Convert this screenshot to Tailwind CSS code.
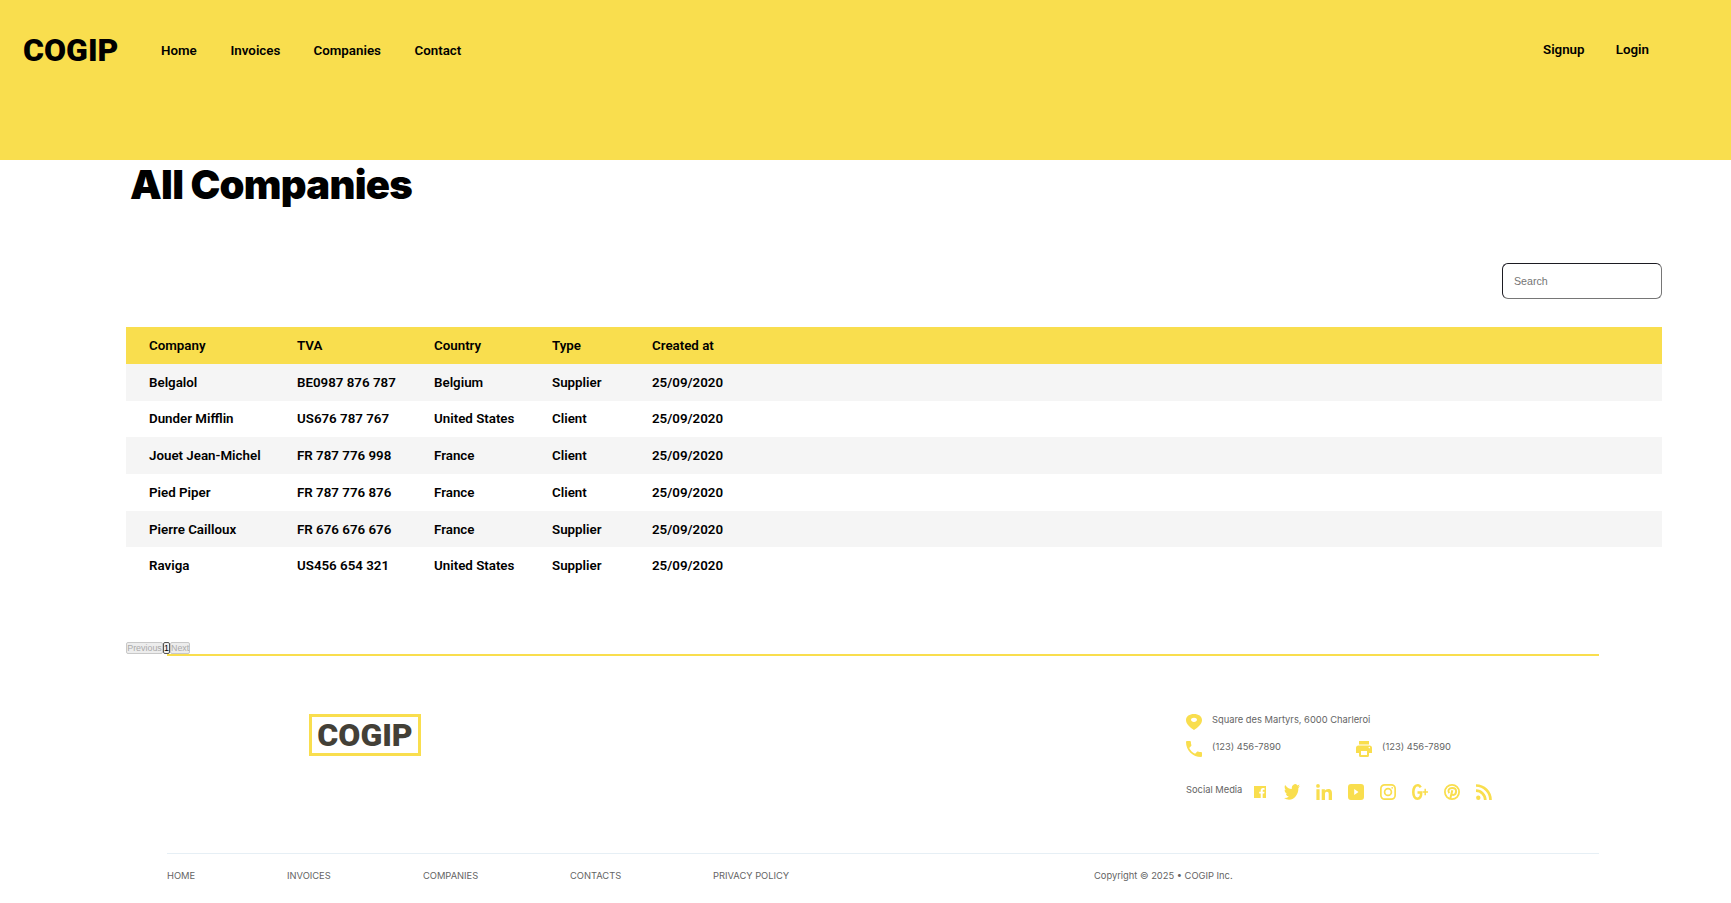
<!DOCTYPE html>
<html lang="en">
<head>
<meta charset="utf-8">
<title>COGIP - All Companies</title>
<script src="https://cdn.jsdelivr.net/npm/@tailwindcss/browser@4"></script>
</head>
<body class="h-[903px] overflow-hidden bg-white font-['Inter',sans-serif] text-black">
<header class="flex h-40 items-start bg-[#f9de4e] font-['Roboto',sans-serif]">
  <div class="ml-[23px] mt-8 w-[138px] text-[32px] leading-9 font-black">COGIP</div>
  <nav class="mt-[41px] flex text-[13.333px] leading-5 font-semibold">
    <a class="w-[69.500px]">Home</a><a class="w-[83px]">Invoices</a><a class="w-[101px]">Companies</a><a>Contact</a>
  </nav>
  <div class="mt-10 ml-auto mr-[82px] flex w-[106px] justify-between text-[13.333px] leading-5 font-semibold"><a>Signup</a><a>Login</a></div>
</header>
<main class="ml-[126px] w-[1536px]">
  <h1 class="h-[103px] pl-1 text-[40px] leading-[50px] font-black tracking-[-0.75px]">All Companies</h1>
  <div class="flex justify-end">
    <input placeholder="Search" class="h-9 w-40 rounded-md border border-t-[#1c1b22] border-l-[#1c1b22] border-r-[#767676] border-b-[#767676] px-[11px] font-['Liberation_Sans',sans-serif] text-[10.667px] placeholder:text-[#757575]">
  </div>
  <table class="mt-7 w-full table-fixed border-collapse text-left font-['Roboto',sans-serif] text-[13.333px] leading-[18px] font-semibold">
    <colgroup><col class="w-[171px]"><col class="w-[137px]"><col class="w-[118px]"><col class="w-[100px]"><col></colgroup>
    <thead><tr class="h-[37px] bg-[#f9de4e]"><th class="pl-[23px] font-semibold">Company</th><th class="font-semibold">TVA</th><th class="font-semibold">Country</th><th class="font-semibold">Type</th><th class="font-semibold">Created at</th></tr></thead>
    <tbody>
      <tr class="h-[37px] bg-[#f5f5f5]"><td class="pl-[23px]">Belgalol</td><td>BE0987 876 787</td><td>Belgium</td><td>Supplier</td><td>25/09/2020</td></tr>
      <tr class="h-9"><td class="pl-[23px]">Dunder Mifflin</td><td>US676 787 767</td><td>United States</td><td>Client</td><td>25/09/2020</td></tr>
      <tr class="h-[37px] bg-[#f5f5f5]"><td class="pl-[23px]">Jouet Jean-Michel</td><td>FR 787 776 998</td><td>France</td><td>Client</td><td>25/09/2020</td></tr>
      <tr class="h-[37px]"><td class="pl-[23px]">Pied Piper</td><td>FR 787 776 876</td><td>France</td><td>Client</td><td>25/09/2020</td></tr>
      <tr class="h-9 bg-[#f5f5f5]"><td class="pt-0.5 pl-[23px]">Pierre Cailloux</td><td class="pt-0.5">FR 676 676 676</td><td class="pt-0.5">France</td><td class="pt-0.5">Supplier</td><td class="pt-0.5">25/09/2020</td></tr>
      <tr class="h-[37px]"><td class="pl-[23px]">Raviga</td><td>US456 654 321</td><td>United States</td><td>Supplier</td><td>25/09/2020</td></tr>
    </tbody>
  </table>
  <div class="mt-[58px] flex h-3 font-['Liberation_Sans',sans-serif] text-[8.9px] leading-[10px]">
    <button disabled class="w-[37px] rounded-[2px] border border-[#c8c8c8] bg-[#ededed] text-[#aaa]">Previous</button>
    <button class="flex w-[7px] justify-center rounded-[2px] border border-[#555] bg-[#efefef]">1</button>
    <button disabled class="w-5 rounded-[2px] border border-[#c8c8c8] bg-[#ededed] text-[#aaa]">Next</button>
  </div>
</main>
<footer class="ml-[167px] w-[1432px] border-t-2 border-[#f9de4e] text-[9.333px] leading-[11px] text-[#646464]">
  <div class="flex h-[197px] justify-between">
    <div class="mt-[58px] ml-[142px] h-[42px] w-28 border-3 border-[#f9de4e] text-center font-['Roboto',sans-serif] text-[32px] leading-9 font-black text-[#434037]">COGIP</div>
    <div class="mt-[58px] w-[413px]">
      <div class="flex h-[27px] gap-2.5">
        <svg class="size-4 fill-[#f9de4e]" viewBox="0 0 16 16"><path fill-rule="evenodd" d="M8 0C3.5 0 0 2.3 0 6c0 4 4 7.500 8 10 4-2.500 8-6 8-10 0-3.700-3.500-6-8-6Zm0 3.700c1.700 0 3 .9 3 2.100S9.700 8 8 8 5 7 5 5.800s1.300-2.100 3-2.100Z"/></svg>
        <span>Square des Martyrs, 6000 Charleroi</span>
      </div>
      <div class="flex h-[43px]">
        <div class="flex w-[170px] gap-2.5">
          <svg class="size-4 fill-[#f9de4e]" viewBox="3 3 18 18"><path d="M6.620 10.790c1.440 2.830 3.760 5.140 6.590 6.590l2.200-2.200c.27-.27.67-.36 1.020-.24 1.120.37 2.330.57 3.570.57.55 0 1 .45 1 1V20c0 .55-.45 1-1 1-9.390 0-17-7.610-17-17 0-.55.45-1 1-1h3.500c.55 0 1 .45 1 1 0 1.250.2 2.450.57 3.570.11.35.03.74-.25 1.020l-2.200 2.200Z"/></svg>
          <span>(123) 456-7890</span>
        </div>
        <div class="flex gap-2.5">
          <svg class="size-4 fill-[#f9de4e]" viewBox="0 0 16 16"><path fill-rule="evenodd" d="M3 0h10v3.500H3ZM2.500 4.500h11A2.500 2.500 0 0 1 16 7v5h-3V9H3v3H0V7a2.500 2.500 0 0 1 2.500-2.500Zm10.800 1.300a.8.8 0 1 0 0 1.600.8.8 0 0 0 0-1.600ZM3 9h10v5.500a1.500 1.500 0 0 1-1.500 1.500h-7A1.500 1.500 0 0 1 3 14.500Zm2 1v4h6v-4Z"/></svg>
          <span>(123) 456-7890</span>
        </div>
      </div>
      <div class="flex">
        <span class="w-[68px]">Social Media</span>
        <svg class="mt-0.5 mr-[18px] size-3 fill-[#f9de4e]" viewBox="0 0 12 12"><path d="M0 0h12v12H8.700V7.600h1.500l.3-1.800H8.700V4.700c0-.6.3-.9.9-.9h1V2.200C10.300 2.100 9.700 2 9 2 7.500 2 6.700 2.900 6.700 4.400v1.400H5.200v1.800h1.500V12H0Z"/></svg>
        <div class="flex gap-4">
        <svg class="size-4 fill-[#f9de4e]" viewBox="0 2 24 20" preserveAspectRatio="none"><path d="M23.953 4.570a10 10 0 0 1-2.825.775 4.958 4.958 0 0 0 2.163-2.723c-.951.555-2.005.959-3.127 1.184a4.920 4.920 0 0 0-8.384 4.482C7.690 8.095 4.067 6.130 1.640 3.162a4.822 4.822 0 0 0-.666 2.475c0 1.710.870 3.213 2.188 4.096a4.904 4.904 0 0 1-2.228-.616v.06a4.923 4.923 0 0 0 3.946 4.827 4.996 4.996 0 0 1-2.212.085 4.936 4.936 0 0 0 4.604 3.417 9.867 9.867 0 0 1-6.102 2.105c-.39 0-.779-.023-1.170-.067a13.995 13.995 0 0 0 7.557 2.209c9.053 0 13.998-7.496 13.998-13.985 0-.21 0-.42-.015-.63A9.935 9.935 0 0 0 24 4.590Z"/></svg>
        <svg class="size-4 fill-[#f9de4e]" viewBox="0 0 16 16"><path d="M.4 5.300h3.200V16H.4ZM2 0a1.900 1.900 0 1 1 0 3.800A1.900 1.900 0 0 1 2 0ZM5.700 5.300h3.200v1.500C9.500 5.700 10.700 5 12.200 5c3 0 3.800 1.900 3.800 4.700V16h-3.300v-5.600c0-1.400-.2-2.600-1.800-2.600S9 9 9 10.400V16H5.700Z"/></svg>
        <svg class="size-4 fill-[#f9de4e]" viewBox="0 0 16 16"><path fill-rule="evenodd" d="M3 0h10q3 0 3 3v10q0 3-3 3H3q-3 0-3-3V3q0-3 3-3Zm3.200 5v6l4.300-3Z"/></svg>
        <svg class="size-4 fill-none stroke-[#f9de4e]" viewBox="0 0 16 16" stroke-width="1.700"><rect x=".85" y=".85" width="14.300" height="14.300" rx="3.800"/><circle cx="8" cy="8" r="3.400"/><circle cx="12.200" cy="3.800" r=".9" fill="#f9de4e" stroke="none"/></svg>
        <svg class="size-4 fill-none stroke-[#f9de4e]" viewBox="0 0 16 16"><path stroke-width="2.600" d="M8.700 3.300A4 6 0 0 0 5.400 1.300C2.900 1.300 1.300 4.300 1.300 8s1.600 6.700 4.100 6.700S9.200 11.800 9.200 8.500H5.500"/><path stroke-width="1.500" d="M13.200 4.700v6.600M10.800 8H16"/></svg>
        <svg class="size-4 fill-none stroke-[#f9de4e]" viewBox="0 0 16 16"><circle cx="8" cy="8" r="7.100" stroke-width="1.800"/><path stroke-width="2" d="M5.200 9.200C3.300 6.500 5 3.900 8.200 3.900c2.400 0 3.900 1.500 3.900 3.400 0 2.100-1.300 3.600-2.900 3.600-.9 0-1.500-.4-1.700-1M8.300 6.300 6.200 15"/></svg>
        <svg class="size-4 fill-none stroke-[#f9de4e]" viewBox="0 0 16 16" stroke-width="2.700"><path d="M0 1.500A14.500 14.500 0 0 1 14.500 16M0 6.700A9.300 9.300 0 0 1 9.300 16"/><circle cx="2.300" cy="13.700" r="2.200" fill="#f9de4e" stroke="none"/></svg>
        </div>
      </div>
    </div>
  </div>
  <div class="flex border-t border-[#e6eff5] pt-4">
    <a class="w-[120px]">HOME</a><a class="w-[136px]">INVOICES</a><a class="w-[147px]">COMPANIES</a><a class="w-[143px]">CONTACTS</a><a class="w-[381px]">PRIVACY POLICY</a><span>Copyright © 2025 • COGIP Inc.</span>
  </div>
</footer>
</body>
</html>
